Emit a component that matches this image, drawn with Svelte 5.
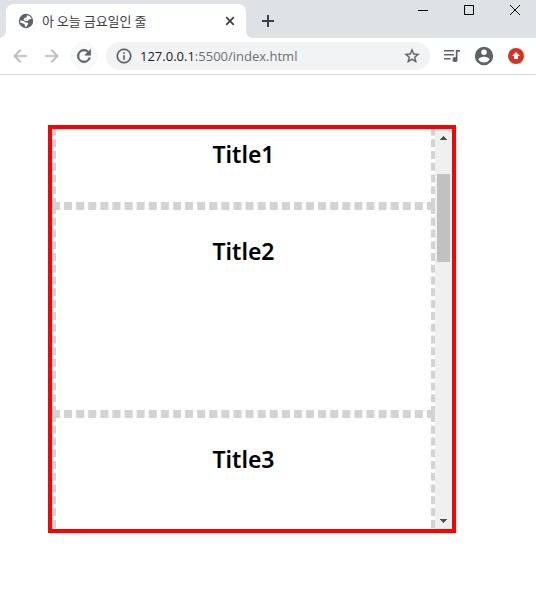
<script lang="ts">
	import { onMount } from 'svelte';

	const titles = ['Title1', 'Title2', 'Title3', 'Title4', 'Title5', 'Title6', 'Title7', 'Title8'];
	const STEP = 40;

	let url = $state('127.0.0.1:5500/index.html');
	let list: HTMLDivElement;
	let track: HTMLDivElement;
	let thumbTop = $state(0);
	let thumbHeight = $state(0);

	const host = $derived(url.split(':')[0]);
	const rest = $derived(url.slice(host.length));

	function updateThumb() {
		const ratio = track.clientHeight / list.scrollHeight;
		thumbTop = Math.floor(list.scrollTop * ratio);
		thumbHeight = Math.round(list.clientHeight * ratio);
	}

	function scrollList(amount: number) {
		list.scrollTop += amount;
	}

	onMount(() => {
		list.scrollTop = 131;
		updateThumb();
	});
</script>

<div class="browser">
	<header class="tab-strip">
		<div class="tab">
			<svg class="favicon" width="16" height="16" viewBox="0 0 16 16">
				<circle cx="8" cy="8" r="7.2" fill="#5f6368"/>
				<path d="M9 2.200c2.400.3 4 1.700 4.600 3.600L11 6.500 9.800 8H7.200L5.500 6.800l1-1.800 2-.5zM2.200 7.600l3.600.4 1.700 1.500 2.300.2.700 1.300-1.300 1.100-.6 1.700-1.600-.2-.3-2.200-2-1.200-2.300-.4z" fill="#fff"/>
			</svg>
			<span class="tab-title">아 오늘 금요일인 줄</span>
			<button class="tab-close" aria-label="Close tab">
				<svg width="10" height="10" viewBox="0 0 10 10" stroke="#3c4043" stroke-width="1.7">
					<path d="M1.200 1.200l7.600 7.600M8.800 1.200l-7.600 7.600"/>
				</svg>
			</button>
		</div>
		<button class="new-tab" aria-label="New tab">
			<svg width="12" height="12" viewBox="0 0 12 12" stroke="#3c4043" stroke-width="2">
				<path d="M6 0v12M0 6h12"/>
			</svg>
		</button>
		<div class="window-controls">
			<button aria-label="Minimize">
				<svg width="10" height="10" viewBox="0 0 10 10" fill="none" stroke="#000"><path d="M0 5.500h10"/></svg>
			</button>
			<button aria-label="Maximize">
				<svg width="10" height="10" viewBox="0 0 10 10" fill="none" stroke="#000"><path d="M.5.5h9v9h-9z"/></svg>
			</button>
			<button aria-label="Close">
				<svg width="10" height="10" viewBox="0 0 10 10" fill="none" stroke="#000"><path d="M0 0l10 10M10 0L0 10"/></svg>
			</button>
		</div>
	</header>

	<nav class="toolbar">
		<button class="tool" aria-label="Back">
			<svg width="20" height="20" viewBox="0 0 24 24" fill="#babcbe" stroke="#babcbe" stroke-width=".4"><path d="M20 11H7.830l5.590-5.590L12 4l-8 8 8 8 1.410-1.410L7.830 13H20v-2z"/></svg>
		</button>
		<button class="tool" aria-label="Forward">
			<svg width="20" height="20" viewBox="0 0 24 24" fill="#babcbe" stroke="#babcbe" stroke-width=".4"><path d="M12 4l-1.410 1.410L16.170 11H4v2h12.170l-5.580 5.590L12 20l8-8z"/></svg>
		</button>
		<button class="tool reload" aria-label="Reload">
			<svg width="20" height="20" viewBox="0 0 24 24" fill="#5f6368" stroke="#5f6368" stroke-width=".7"><path d="M17.650 6.350A8 8 0 1 0 19.730 14h-2.080A6 6 0 1 1 12 6c1.660 0 3.140.69 4.220 1.780L13 11h7V4l-2.350 2.350z"/></svg>
		</button>
		<div class="address">
			<svg width="18" height="18" viewBox="0 0 24 24" fill="#5f6368" stroke="#5f6368" stroke-width=".3"><path d="M11 7h2v2h-2zm0 4h2v6h-2zm1-9a10 10 0 1 0 0 20 10 10 0 0 0 0-20zm0 18a8 8 0 1 1 0-16 8 8 0 0 1 0 16z"/></svg>
			<div class="url">
				<span class="url-text" aria-hidden="true">{host}<span>{rest}</span></span>
				<input type="text" bind:value={url} aria-label="Address" spellcheck="false" />
			</div>
			<button class="star" aria-label="Bookmark">
				<svg width="18" height="18" viewBox="0 0 24 24" fill="#5f6368" stroke="#5f6368" stroke-width=".4"><path d="M22 9.240l-7.190-.62L12 2 9.190 8.630 2 9.240l5.460 4.730L5.820 21 12 17.270 18.180 21l-1.630-7.030L22 9.240zM12 15.400l-3.760 2.270 1-4.280-3.320-2.880 4.380-.38L12 6.100l1.710 4.040 4.380.38-3.320 2.880 1 4.280L12 15.400z"/></svg>
			</button>
		</div>
		<div class="extras">
			<button aria-label="Media">
				<svg width="18" height="16" viewBox="0 0 18 16" fill="#5f6368">
					<path d="M1 2h10v1.500H1zM1 6h10v1.500H1zM1 10h6.500v1.500H1zM12 2h5v1.700h-2.500v7.800a2.500 2.500 0 1 1-1.700-2.300V2z"/>
				</svg>
			</button>
			<button aria-label="Profile">
				<svg width="22" height="22" viewBox="0 0 24 24" fill="#5f6368"><path d="M12 2a10 10 0 1 0 0 20 10 10 0 0 0 0-20zm0 3a3 3 0 1 1 0 6 3 3 0 0 1 0-6zm0 14.200A7.200 7.200 0 0 1 6 16c0-2 4-3.100 6-3.100s6 1.100 6 3.100a7.200 7.200 0 0 1-6 3.200z"/></svg>
			</button>
			<button aria-label="Update">
				<svg width="16" height="16" viewBox="0 0 16 16"><circle cx="8" cy="8" r="8" fill="#d93025"/><path d="M8 4L12 8H10v3H6V8H4z" fill="#fff"/></svg>
			</button>
		</div>
	</nav>

	<main>
		<div class="frame">
			<div class="list" bind:this={list} onscroll={updateThumb}>
				{#each titles as title}
					<section class="item">
						<h2>{title}</h2>
					</section>
				{/each}
			</div>
			<div class="scrollbar">
				<button aria-label="Scroll up" onclick={() => scrollList(-STEP)}>
					<svg width="7" height="4" viewBox="0 0 7 4" fill="#505050" shape-rendering="crispEdges"><path d="M3 0h1v1h1v1h1v1h1v1H0V3h1V2h1V1h1z"/></svg>
				</button>
				<div class="track" bind:this={track}>
					<div class="thumb" style="height: {thumbHeight}px; margin-top: {thumbTop}px"></div>
				</div>
				<button aria-label="Scroll down" onclick={() => scrollList(STEP)}>
					<svg width="7" height="4" viewBox="0 0 7 4" fill="#505050" shape-rendering="crispEdges"><path d="M0 0h7v1H6v1H5v1H4v1H3V3H2V2H1V1H0z"/></svg>
				</button>
			</div>
		</div>
	</main>
</div>

<style>
	:global(body) {
		margin: 0;
		background: #fff;
	}

	.browser {
		font-family: 'Open Sans', 'Noto Sans CJK KR', sans-serif;
	}

	button {
		display: flex;
		align-items: center;
		justify-content: center;
		padding: 0;
		border: none;
		background: transparent;
	}

	svg {
		flex-shrink: 0;
	}

	.tab-strip {
		display: flex;
		height: 38px;
		padding-left: 6px;
		background: #dee1e6;
	}

	.tab {
		position: relative;
		display: flex;
		align-items: center;
		box-sizing: border-box;
		width: 240px;
		height: 34px;
		margin-top: 4px;
		padding: 0 8px 0 12px;
		background: #fff;
		border-radius: 8px 8px 0 0;
	}

	.tab::before,
	.tab::after {
		content: '';
		position: absolute;
		bottom: 0;
		width: 8px;
		height: 8px;
	}

	.tab::before {
		right: 100%;
		background: radial-gradient(circle at 0 0, transparent 8px, #fff 8px);
	}

	.tab::after {
		left: 100%;
		background: radial-gradient(circle at 100% 0, transparent 8px, #fff 8px);
	}

	.tab-title {
		flex: 1;
		margin-left: 8px;
		color: #3c4043;
		font-family: 'Noto Sans CJK KR', sans-serif;
		font-size: 13px;
		line-height: 16px;
		white-space: nowrap;
	}

	.tab-close {
		width: 16px;
		height: 16px;
	}

	.new-tab {
		width: 28px;
		height: 28px;
		margin: 7px 0 0 8px;
	}

	.window-controls {
		display: flex;
		gap: 4px;
		height: 20px;
		margin-left: auto;
	}

	.window-controls button {
		width: 42px;
	}

	.toolbar {
		display: flex;
		align-items: center;
		gap: 4px;
		height: 36px;
		padding: 0 10px 0 6px;
		border-bottom: 1px solid #d5d7da;
		background: #fff;
	}

	.tool {
		width: 28px;
		height: 28px;
		border-radius: 50%;
	}

	.reload {
		background: #f8f9fa;
	}

	.address {
		display: flex;
		align-items: center;
		flex: 1;
		min-width: 0;
		height: 28px;
		margin-left: 4px;
		padding: 0 9px;
		border-radius: 14px;
		background: #f1f3f4;
	}

	.url {
		display: grid;
		flex: 1;
		min-width: 0;
		margin-left: 7px;
		font-size: 13px;
		line-height: 20px;
	}

	.url-text,
	.url input {
		grid-area: 1 / 1;
		overflow: hidden;
		white-space: pre;
	}

	.url-text {
		color: #202124;
	}

	.url-text span {
		color: #6c7074;
	}

	.url input {
		width: 100%;
		padding: 0;
		border: none;
		outline: none;
		background: transparent;
		color: transparent;
		caret-color: #202124;
		font: inherit;
	}

	.extras {
		display: flex;
		align-items: center;
		gap: 12px;
		margin-left: 8px;
	}

	.extras button {
		width: 20px;
		height: 28px;
	}

	main {
		padding: 50px 48px;
	}

	.frame {
		display: flex;
		box-sizing: border-box;
		max-width: 408px;
		height: 408px;
		border: 4px solid red;
	}

	.list {
		flex: 1;
		overflow-y: scroll;
		scrollbar-width: none;
	}

	.item {
		box-sizing: border-box;
		height: 208px;
		padding-top: 25px;
		border: 4px dashed lightgray;
	}

	.item:first-child {
		padding-top: 136px;
	}

	h2 {
		margin: 0;
		color: #000;
		font-family: 'Noto Sans', sans-serif;
		font-size: 23px;
		font-weight: 600;
		line-height: 32px;
		text-align: center;
	}

	.scrollbar {
		display: flex;
		flex-direction: column;
		width: 17px;
		background: #f0f0f0;
	}

	.scrollbar button {
		width: 17px;
		height: 17px;
	}

	.track {
		display: flow-root;
		flex: 1;
	}

	.thumb {
		width: 13px;
		margin-left: 2px;
		background: #c1c1c1;
	}
</style>
